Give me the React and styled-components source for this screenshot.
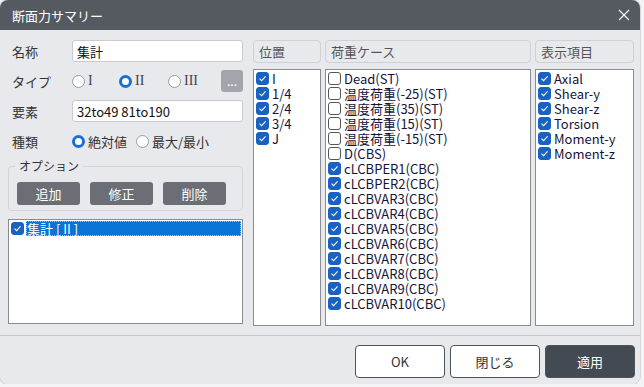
import React from "react";
import styled, { createGlobalStyle } from "styled-components";

const GlobalStyle = createGlobalStyle`
  body {
    margin: 0;
    background: #f4f4f6;
    font-family: "Noto Sans CJK JP", "Noto Sans", sans-serif;
  }
`;

const Dialog = styled.div`
  width: 640px;
  height: 384px;
  background: #e8e9ed;
  border-radius: 8px;
  overflow: hidden;
  display: flex;
  flex-direction: column;
  box-shadow: 0 0 0 1px #d6d7db;
`;

const TitleBar = styled.div`
  height: 30px;
  flex: none;
  background: #555a61;
  color: #fff;
  display: flex;
  align-items: center;
  justify-content: space-between;
  padding: 0 10px 0 12px;
  font-size: 13px;
`;

const Close = styled.svg`
  width: 12px;
  height: 12px;
`;

const Body = styled.div`
  flex: 1;
  display: flex;
  padding: 10px 6px 9px 8px;
  border-bottom: 1px solid #c3c5ca;
`;

const LeftPanel = styled.div`
  width: 235px;
  margin-right: 10px;
  display: flex;
  flex-direction: column;
`;

const FormRow = styled.div`
  height: 22px;
  display: flex;
  align-items: center;
  margin-bottom: ${(p) => p.$mb ?? 8}px;
`;

const Label = styled.div`
  width: 60px;
  padding-left: 4px;
  font-size: 13px;
  color: #333;
`;

const Input = styled.div`
  flex: 1;
  height: 22px;
  box-sizing: border-box;
  background: #fff;
  border: 1px solid #c9cbd0;
  border-radius: 3px;
  padding: 0 4px;
  display: flex;
  align-items: center;
  font-size: 13px;
  color: #111;
`;

const RadioGroup = styled.div`
  flex: 1;
  display: flex;
  align-items: center;
`;

const Radio = styled.div`
  display: flex;
  align-items: center;
  width: ${(p) => p.$w}px;
  font-size: ${(p) => (p.$serif ? 14 : 13)}px;
  color: ${(p) => (p.$serif ? "#444" : "#333")};
  font-family: ${(p) =>
    p.$serif ? '"Liberation Serif", serif' : '"Noto Sans CJK JP", sans-serif'};
`;

const Dot = styled.span`
  width: 13px;
  height: 13px;
  box-sizing: border-box;
  border-radius: 50%;
  margin-right: 3px;
  flex: none;
  background: #fff;
  border: ${(p) => (p.$on ? "3.5px solid #1a6fd6" : "1px solid #9a9ca2")};
`;

const MoreButton = styled.div`
  width: 22px;
  height: 22px;
  border-radius: 3px;
  background: #a2a6ac;
  color: #fff;
  font-size: 12px;
  display: flex;
  align-items: center;
  justify-content: center;
  line-height: 1;
`;

const Fieldset = styled.div`
  position: relative;
  margin-top: 14px;
  height: 45px;
  border: 1px solid #d2d4d8;
  border-radius: 4px;
  display: flex;
  align-items: flex-end;
  gap: 10px;
  padding: 0 8px 5px 8px;
  box-sizing: border-box;
`;

const Legend = styled.span`
  position: absolute;
  top: -10px;
  left: 6px;
  padding: 0 4px;
  background: #e8e9ed;
  font-size: 12px;
  line-height: 18px;
  color: #333;
`;

const SmallButton = styled.div`
  width: 63px;
  height: 23px;
  border-radius: 3px;
  background: #6b6f75;
  color: #fff;
  font-size: 13px;
  display: flex;
  align-items: center;
  justify-content: center;
`;

const SummaryList = styled.div`
  margin-top: 8px;
  height: 105px;
  box-sizing: border-box;
  background: #fff;
  border: 1px solid #8b8b92;
  padding: 1px 1px 0 2px;
`;

const Column = styled.div`
  width: ${(p) => p.$w}px;
  margin-left: ${(p) => p.$ml}px;
  display: flex;
  flex-direction: column;
`;

const Header = styled.div`
  height: 23px;
  box-sizing: border-box;
  border: 1px solid #cfd1d5;
  border-radius: 4px;
  padding: 0 5px;
  display: flex;
  align-items: center;
  font-size: 13px;
  color: #555;
`;

const ListBox = styled.div`
  margin-top: 6px;
  height: 257px;
  box-sizing: border-box;
  background: #fff;
  border: 1px solid #8b8b92;
  padding: 1px 2px;
`;

const Item = styled.div`
  height: 15px;
  line-height: 15px;
  display: flex;
  align-items: center;
  font-size: 13px;
  color: #14143a;
  white-space: nowrap;
`;

const ItemText = styled.span`
  flex: ${(p) => (p.$selected ? 1 : "none")};
  height: 15px;
  line-height: 15px;
  padding-left: 1px;
  background: ${(p) => (p.$selected ? "#0a74d6" : "transparent")};
  color: ${(p) => (p.$selected ? "#fff" : "inherit")};
  outline: ${(p) => (p.$selected ? "1px dotted #9cc8f2" : "none")};
  outline-offset: -1px;
`;

const Box = styled.span`
  width: 13px;
  height: 13px;
  box-sizing: border-box;
  border-radius: 3px;
  margin-right: 2px;
  flex: none;
  display: flex;
  align-items: center;
  justify-content: center;
  background: ${(p) => (p.$on ? "#1a62c2" : "#fff")};
  border: 1px solid ${(p) => (p.$on ? "#1a62c2" : "#555")};
`;

const Footer = styled.div`
  height: 48px;
  flex: none;
  display: flex;
  justify-content: flex-end;
  align-items: flex-start;
  padding: 9px 5px 0 0;
  gap: 5px;
`;

const DialogButton = styled.div`
  width: 90px;
  height: 33px;
  box-sizing: border-box;
  border-radius: 4px;
  border: 1px solid #4d535a;
  background: ${(p) => (p.$primary ? "#434a52" : "#fff")};
  color: ${(p) => (p.$primary ? "#fff" : "#333")};
  font-size: 13px;
  display: flex;
  align-items: center;
  justify-content: center;
`;

function Check({ on }) {
  return (
    <Box $on={on}>
      {on && (
        <svg width="9" height="9" viewBox="0 0 9 9">
          <path d="M1.5 4.6 L3.6 6.6 L7.6 2.4" fill="none" stroke="#fff" strokeWidth="1.1" />
        </svg>
      )}
    </Box>
  );
}

const positions = ["I", "1/4", "2/4", "3/4", "J"];
const loads = [
  ["Dead(ST)", false],
  ["温度荷重(-25)(ST)", false],
  ["温度荷重(35)(ST)", false],
  ["温度荷重(15)(ST)", false],
  ["温度荷重(-15)(ST)", false],
  ["D(CBS)", false],
  ["cLCBPER1(CBC)", true],
  ["cLCBPER2(CBC)", true],
  ["cLCBVAR3(CBC)", true],
  ["cLCBVAR4(CBC)", true],
  ["cLCBVAR5(CBC)", true],
  ["cLCBVAR6(CBC)", true],
  ["cLCBVAR7(CBC)", true],
  ["cLCBVAR8(CBC)", true],
  ["cLCBVAR9(CBC)", true],
  ["cLCBVAR10(CBC)", true],
];
const outputs = ["Axial", "Shear-y", "Shear-z", "Torsion", "Moment-y", "Moment-z"];

export default function App() {
  return (
    <>
      <GlobalStyle />
      <Dialog>
        <TitleBar>
          <span>断面力サマリー</span>
          <Close viewBox="0 0 12 12">
            <path d="M1 1 L11 11 M11 1 L1 11" stroke="#fff" strokeWidth="1.2" />
          </Close>
        </TitleBar>
        <Body>
          <LeftPanel>
            <FormRow>
              <Label>名称</Label>
              <Input>集計</Input>
            </FormRow>
            <FormRow>
              <Label>タイプ</Label>
              <RadioGroup>
                <Radio $w={47} $serif><Dot />I</Radio>
                <Radio $w={49} $serif><Dot $on />II</Radio>
                <Radio $w={53} $serif><Dot />III</Radio>
              </RadioGroup>
              <MoreButton>...</MoreButton>
            </FormRow>
            <FormRow $mb={8}>
              <Label>要素</Label>
              <Input>32to49 81to190</Input>
            </FormRow>
            <FormRow $mb={0}>
              <Label>種類</Label>
              <RadioGroup>
                <Radio $w={64}><Dot $on />絶対値</Radio>
                <Radio $w={80}><Dot />最大/最小</Radio>
              </RadioGroup>
            </FormRow>
            <Fieldset>
              <Legend>オプション</Legend>
              <SmallButton>追加</SmallButton>
              <SmallButton>修正</SmallButton>
              <SmallButton>削除</SmallButton>
            </Fieldset>
            <SummaryList>
              <Item>
                <Check on />
                <ItemText $selected>集計 [ II ]</ItemText>
              </Item>
            </SummaryList>
          </LeftPanel>
          <Column $w={68} $ml={0}>
            <Header>位置</Header>
            <ListBox>
              {positions.map((p) => (
                <Item key={p}>
                  <Check on />
                  <ItemText>{p}</ItemText>
                </Item>
              ))}
            </ListBox>
          </Column>
          <Column $w={206} $ml={4}>
            <Header>荷重ケース</Header>
            <ListBox>
              {loads.map(([name, on]) => (
                <Item key={name}>
                  <Check on={on} />
                  <ItemText>{name}</ItemText>
                </Item>
              ))}
            </ListBox>
          </Column>
          <Column $w={99} $ml={4}>
            <Header>表示項目</Header>
            <ListBox>
              {outputs.map((o) => (
                <Item key={o}>
                  <Check on />
                  <ItemText>{o}</ItemText>
                </Item>
              ))}
            </ListBox>
          </Column>
        </Body>
        <Footer>
          <DialogButton>OK</DialogButton>
          <DialogButton>閉じる</DialogButton>
          <DialogButton $primary>適用</DialogButton>
        </Footer>
      </Dialog>
    </>
  );
}
